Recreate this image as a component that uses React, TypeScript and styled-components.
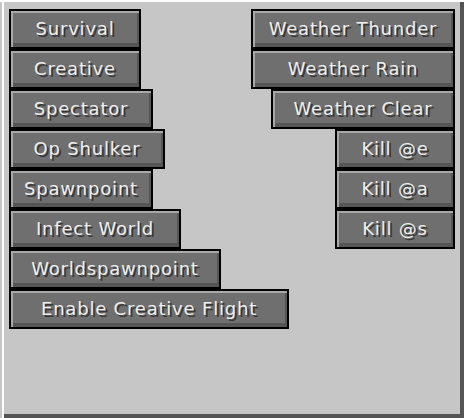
import styled, { createGlobalStyle } from "styled-components";

const GlobalStyle = createGlobalStyle`
  html, body {
    margin: 0;
    padding: 0;
    background: #c6c6c6;
  }
`;

const leftButtons = [
  { label: "Survival", width: 132 },
  { label: "Creative", width: 132 },
  { label: "Spectator", width: 144 },
  { label: "Op Shulker", width: 156 },
  { label: "Spawnpoint", width: 144 },
  { label: "Infect World", width: 172 },
  { label: "Worldspawnpoint", width: 212 },
  { label: "Enable Creative Flight", width: 280 },
];

const rightButtons = [
  { label: "Weather Thunder", width: 204 },
  { label: "Weather Rain", width: 204 },
  { label: "Weather Clear", width: 184 },
  { label: "Kill @e", width: 120 },
  { label: "Kill @a", width: 120 },
  { label: "Kill @s", width: 120 },
];

const App = () => {
  return (
    <>
      <GlobalStyle />
      <Panel>
        <Column>
          {leftButtons.map((b) => (
            <McButton key={b.label} $width={b.width}>
              {b.label}
            </McButton>
          ))}
        </Column>
        <Column $right>
          {rightButtons.map((b) => (
            <McButton key={b.label} $width={b.width}>
              {b.label}
            </McButton>
          ))}
        </Column>
      </Panel>
    </>
  );
};

export default App;

const Panel = styled.div`
  box-sizing: border-box;
  width: 464px;
  height: 418px;
  padding: 9px;
  display: grid;
  grid-template-columns: 1fr;
  align-content: start;
  background: #c6c6c6;
  box-shadow:
    inset 0 2px 0 #ffffff,
    inset 2px 0 0 #c6c6c6,
    inset 4px 0 0 #ffffff,
    inset -4px 0 0 #555555,
    inset 0 -4px 0 #555555;
`;

// both columns share one grid cell, so the long rows can run under each other
const Column = styled.div<{ $right?: boolean }>`
  grid-area: 1 / 1;
  justify-self: ${(p) => (p.$right ? "end" : "start")};
  display: flex;
  flex-direction: column;
  align-items: ${(p) => (p.$right ? "flex-end" : "flex-start")};
`;

const McButton = styled.button<{ $width: number }>`
  box-sizing: border-box;
  width: ${(p) => p.$width}px;
  height: 40px;
  margin: 0;
  padding: 0 0 2px 0;
  border: 2px solid #000000;
  background: #6f6f6f;
  box-shadow:
    inset 2px 2px 0 #a8a8a8,
    inset -2px -4px 0 #565656;
  display: flex;
  align-items: center;
  justify-content: center;
  font-family: "DejaVu Sans", sans-serif;
  font-size: 18px;
  letter-spacing: 0.8px;
  color: #eeeeee;
  text-shadow: 2px 2px 0 #383838;
  white-space: nowrap;
  cursor: pointer;
`;
